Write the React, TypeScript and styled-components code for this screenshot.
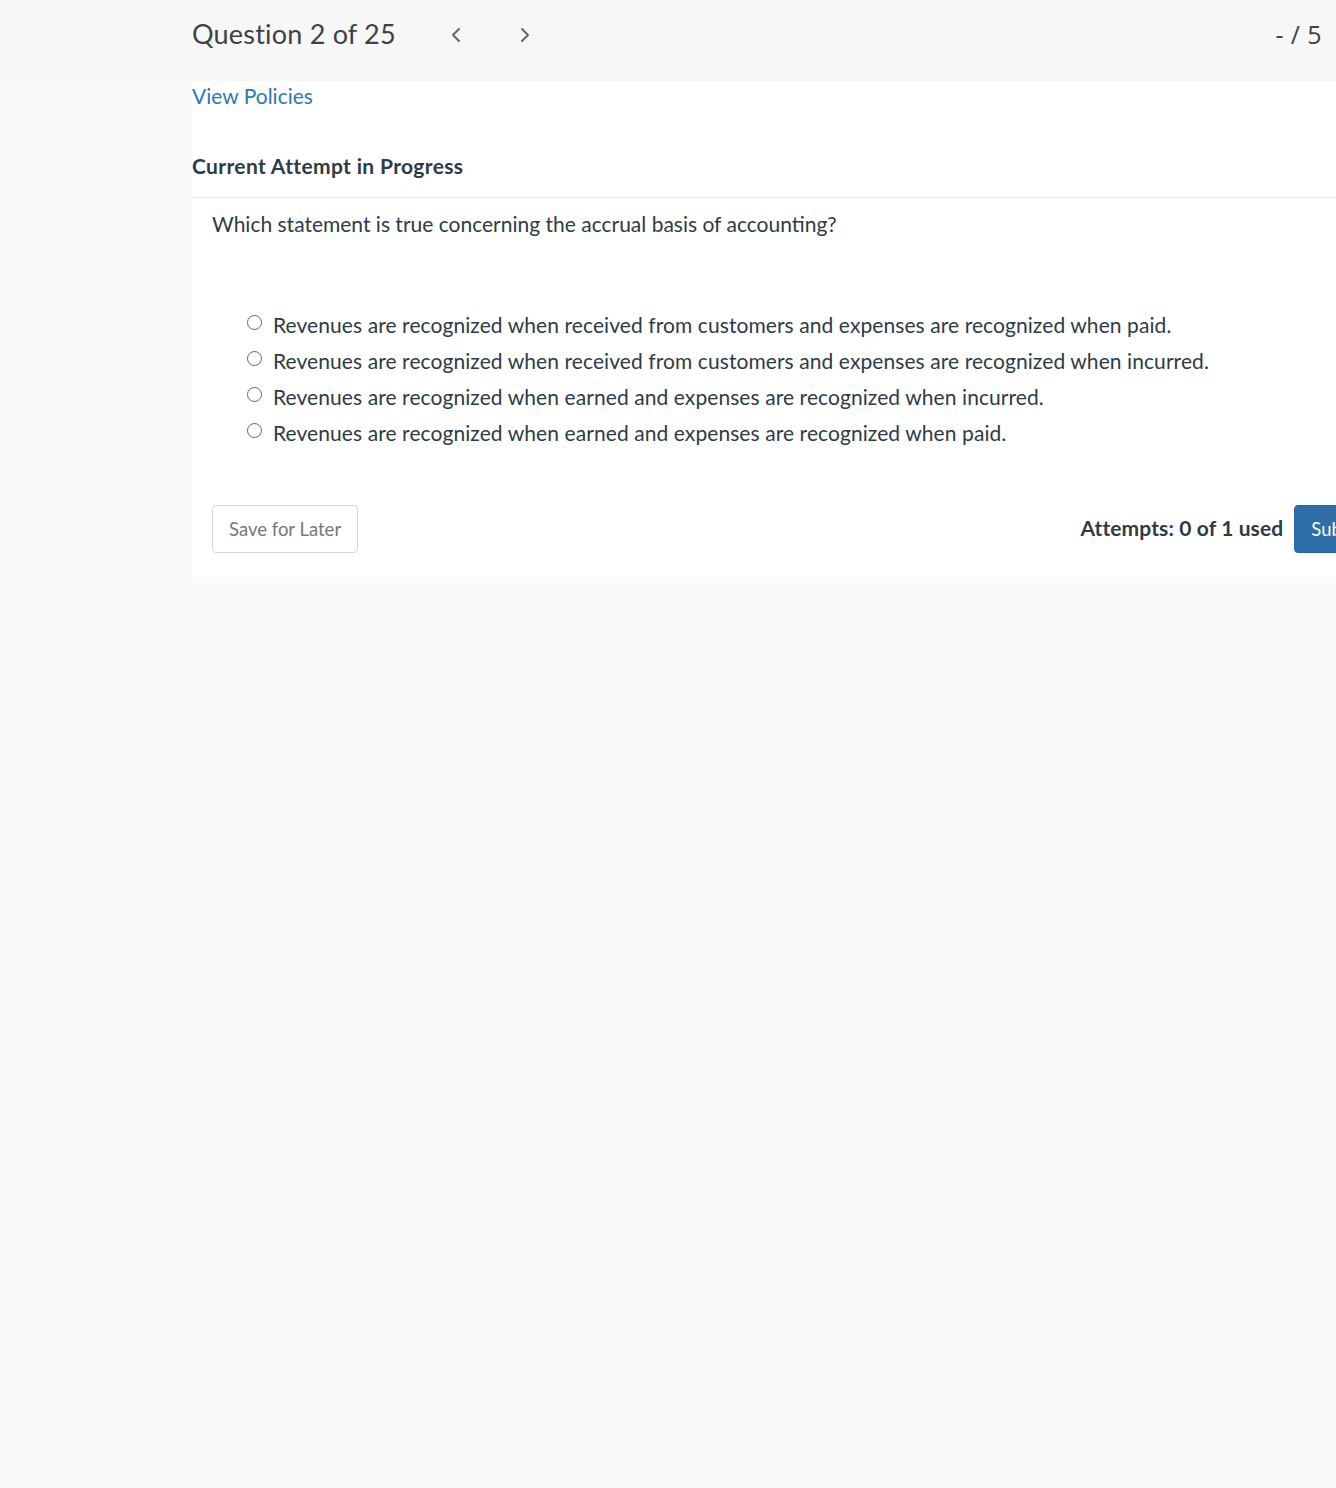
import React from 'react';
import styled, { createGlobalStyle } from 'styled-components';
import { ChevronLeft, ChevronRight } from 'lucide-react';

const GlobalStyle = createGlobalStyle`
  html, body {
    margin: 0;
    padding: 0;
    background: #fafafa;
    overflow-x: hidden;
  }
  body {
    font-family: Lato, "Noto Sans", sans-serif;
    color: #2d3b45;
  }
`;

const Page = styled.div`
  min-height: 1488px;
  background: #fafafa;
  overflow: hidden;
`;

const TopBar = styled.header`
  height: 81px;
  background: #f7f7f7;
  display: flex;
  align-items: center;
  padding: 0 14px 14px 192px;
  box-sizing: border-box;
`;

const QuestionTitle = styled.h1`
  margin: 0;
  font-size: 27px;
  font-weight: 400;
  color: #3d4246;
  letter-spacing: 0.2px;
`;

const NavGroup = styled.div`
  display: flex;
  align-items: center;
  gap: 45px;
  margin-left: 48px;
  margin-top: 2px;
`;

const NavButton = styled.button`
  border: none;
  background: transparent;
  padding: 0;
  display: flex;
  align-items: center;
  color: #666;
  cursor: pointer;
`;

const Score = styled.div`
  margin-left: auto;
  font-family: "Open Sans", Lato, sans-serif;
  font-size: 25px;
  color: #3d4246;
  letter-spacing: 0.4px;
`;

const Panel = styled.main`
  margin-left: 192px;
  width: 1279px;
  background: #fff;
  padding-bottom: 24px;
`;

const PolicyLink = styled.a`
  display: inline-block;
  font-size: 21px;
  color: #2f77b1;
  text-decoration: none;
  margin-top: 1px;
  line-height: 28px;
`;

const AttemptHeading = styled.h2`
  margin: 0;
  padding: 44px 0 19px;
  font-size: 21px;
  font-weight: 700;
  letter-spacing: 0.35px;
  line-height: 24px;
  color: #2d3b45;
  border-bottom: 1px solid #e6e6e6;
`;

const QuestionText = styled.p`
  margin: 0;
  padding: 13px 20px 0;
  font-size: 21px;
  line-height: 26px;
  color: #2d3b45;
`;

const OptionList = styled.div`
  display: flex;
  flex-direction: column;
  padding: 69px 0 0 55px;
`;

const OptionRow = styled.label`
  display: flex;
  align-items: center;
  height: 36px;
  font-size: 21px;
  letter-spacing: 0.08px;
  color: #2d3b45;
  cursor: pointer;
`;

const Radio = styled.span`
  width: 15px;
  height: 15px;
  border: 1px solid #666;
  border-radius: 50%;
  box-sizing: border-box;
  margin-right: 11px;
  margin-top: -3px;
  flex-shrink: 0;
`;

const Footer = styled.div`
  display: flex;
  align-items: center;
  padding: 55px 20px 0;
`;

const SaveButton = styled.button`
  height: 48px;
  padding: 0 16px;
  background: #fff;
  border: 1px solid #d7d7d7;
  border-radius: 4px;
  font-family: Lato, sans-serif;
  font-size: 18.5px;
  color: #777;
  cursor: pointer;
`;

const Attempts = styled.span`
  margin-left: auto;
  font-size: 21px;
  font-weight: 700;
  letter-spacing: 0.12px;
  color: #2d3b45;
  margin-right: 11px;
  margin-top: -4px;
`;

const SubmitButton = styled.button`
  height: 48px;
  padding: 0 16px;
  background: #2f6fa7;
  border: 1px solid #2a6396;
  border-radius: 4px;
  font-family: Lato, sans-serif;
  font-size: 18.5px;
  color: #fff;
  cursor: pointer;
  white-space: nowrap;
`;

const options = [
  'Revenues are recognized when received from customers and expenses are recognized when paid.',
  'Revenues are recognized when received from customers and expenses are recognized when incurred.',
  'Revenues are recognized when earned and expenses are recognized when incurred.',
  'Revenues are recognized when earned and expenses are recognized when paid.',
];

const App: React.FC = () => {
  return (
    <Page>
      <GlobalStyle />
      <TopBar>
        <QuestionTitle>Question 2 of 25</QuestionTitle>
        <NavGroup>
          <NavButton aria-label="Previous">
            <ChevronLeft size={24} strokeWidth={2} />
          </NavButton>
          <NavButton aria-label="Next">
            <ChevronRight size={24} strokeWidth={2} />
          </NavButton>
        </NavGroup>
        <Score>- / 5</Score>
      </TopBar>

      <Panel>
        <PolicyLink href="#">View Policies</PolicyLink>
        <AttemptHeading>Current Attempt in Progress</AttemptHeading>
        <QuestionText>Which statement is true concerning the accrual basis of accounting?</QuestionText>

        <OptionList>
          {options.map((text) => (
            <OptionRow key={text}>
              <Radio />
              {text}
            </OptionRow>
          ))}
        </OptionList>

        <Footer>
          <SaveButton>Save for Later</SaveButton>
          <Attempts>Attempts: 0 of 1 used</Attempts>
          <SubmitButton>Submit Answer</SubmitButton>
        </Footer>
      </Panel>
    </Page>
  );
};

export default App;
